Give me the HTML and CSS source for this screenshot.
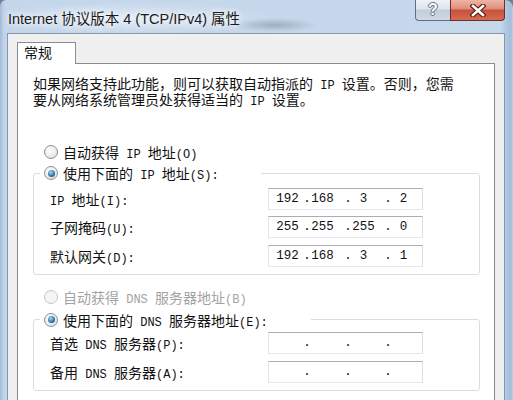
FILE: index.html
```html
<!DOCTYPE html>
<html lang="zh-CN">
<head>
  <meta charset="UTF-8" />
  <meta name="viewport" content="width=device-width, initial-scale=1.0"/>
  <title>Internet 协议版本 4 (TCP/IPv4) 属性</title>
  <link rel="stylesheet" href="styles.css">
</head>
<body>
  <div class="window">
    <div class="titlebar">
      <div class="caption">Internet 协议版本 4 (TCP/IPv4) 属性</div>
      <div class="caption-buttons">
        <div class="cap-btn help">?</div>
        <div class="cap-btn close">
          <svg width="16" height="13" viewBox="0 0 16 13">
            <path d="M3 2 L13 11 M13 2 L3 11" stroke="#5b2219" stroke-width="5" stroke-linecap="square"/>
            <path d="M3 2 L13 11 M13 2 L3 11" stroke="#fff" stroke-width="2.6" stroke-linecap="square"/>
          </svg>
        </div>
      </div>
    </div>

    <div class="client">
      <div class="tabs">
        <div class="tab">常规</div>
      </div>

      <div class="panel">
        <p class="intro">如果网络支持此功能，则可以获取自动指派的<span class="en"> IP </span>设置。否则，您需<br>要从网络系统管理员处获得适当的<span class="en"> IP </span>设置。</p>

        <label class="radio first"><span class="dot"></span><span>自动获得<span class="en"> IP </span>地址<span class="en">(O)</span></span></label>

        <fieldset class="group ip-group">
          <legend><label class="radio"><span class="dot checked"></span><span>使用下面的<span class="en"> IP </span>地址<span class="en">(S):</span></span></label></legend>
          <div class="row">
            <span class="label"><span class="en">IP </span>地址<span class="en">(I):</span></span>
            <div class="ipbox"><span class="f">192</span><span class="d">.</span><span class="f">168</span><span class="d">.</span><span class="f">3</span><span class="d">.</span><span class="f">2</span></div>
          </div>
          <div class="row">
            <span class="label">子网掩码<span class="en">(U):</span></span>
            <div class="ipbox"><span class="f">255</span><span class="d">.</span><span class="f">255</span><span class="d">.</span><span class="f">255</span><span class="d">.</span><span class="f">0</span></div>
          </div>
          <div class="row">
            <span class="label">默认网关<span class="en">(D):</span></span>
            <div class="ipbox"><span class="f">192</span><span class="d">.</span><span class="f">168</span><span class="d">.</span><span class="f">3</span><span class="d">.</span><span class="f">1</span></div>
          </div>
        </fieldset>

        <label class="radio second disabled"><span class="dot"></span><span>自动获得<span class="en"> DNS </span>服务器地址<span class="en">(B)</span></span></label>

        <fieldset class="group dns-group">
          <legend><label class="radio"><span class="dot checked"></span><span>使用下面的<span class="en"> DNS </span>服务器地址<span class="en">(E):</span></span></label></legend>
          <div class="row">
            <span class="label">首选<span class="en"> DNS </span>服务器<span class="en">(P):</span></span>
            <div class="ipbox"><span class="f"></span><span class="d">.</span><span class="f"></span><span class="d">.</span><span class="f"></span><span class="d">.</span><span class="f"></span></div>
          </div>
          <div class="row">
            <span class="label">备用<span class="en"> DNS </span>服务器<span class="en">(A):</span></span>
            <div class="ipbox"><span class="f"></span><span class="d">.</span><span class="f"></span><span class="d">.</span><span class="f"></span><span class="d">.</span><span class="f"></span></div>
          </div>
        </fieldset>
      </div>
    </div>
  </div>
</body>
</html>
```

FILE: styles.css
```css
body {
  margin: 0;
  width: 513px;
  height: 400px;
  overflow: hidden;
  background: #6f7d8c;
  font-family: "Noto Sans CJK SC", sans-serif;
  font-size: 14px;
  color: #111;
}

/* aero glass frame */
.window {
  height: 400px;
  box-sizing: border-box;
  padding: 0 8px 0 7px;
  display: flex;
  flex-direction: column;
  border-top-left-radius: 6px;
  border-top-right-radius: 8px;
  background: linear-gradient(to right, #9fb9d8 0, #bcd0e6 3px, #c4d6ea 6px, #c6d8eb 500px, #b2c8e1 506px, #a3bddb 511px, #bcd0e6 100%);
}

.titlebar {
  height: 33px;
  flex-shrink: 0;
  display: flex;
  justify-content: space-between;
  align-items: flex-start;
  background:
    radial-gradient(ellipse 42px 7px at 268px 25px, rgba(110, 125, 142, 0.45), transparent),
    radial-gradient(ellipse 150px 16px at 120px 18px, rgba(235, 242, 249, 0.7), transparent);
}

.caption {
  padding: 10px 0 0 1px;
  font-family: "Liberation Sans", "Noto Sans CJK SC", sans-serif;
  font-size: 14.5px;
  line-height: 18px;
  color: #1b1b1b;
  text-shadow: 0 0 6px #fff, 0 0 10px rgba(255, 255, 255, 0.8);
}

.caption-buttons {
  display: flex;
}

.cap-btn {
  height: 21px;
  box-sizing: border-box;
  border: 1px solid #5f6f82;
  border-top: none;
  display: flex;
  align-items: center;
  justify-content: center;
}

.help {
  width: 35px;
  border-right: none;
  border-bottom-left-radius: 4px;
  background: linear-gradient(#eef2f7 0, #dce4ed 45%, #c1cddb 50%, #cfd9e5 100%);
  color: #fff;
  font: bold 16px "Liberation Sans", sans-serif;
  text-shadow: 0 0 1px #4c5866, 1px 0 0 #6b7785, -1px 0 0 #6b7785, 0 1px 0 #6b7785, 0 -1px 0 #6b7785;
}

.close {
  width: 55px;
  border-color: #6b3128;
  border-bottom-right-radius: 4px;
  background: linear-gradient(#efb5a7 0, #de8d7a 45%, #c8513b 50%, #d66a51 100%);
}

/* dialog body */
.client {
  flex: 1;
  min-height: 0;
  display: flex;
  flex-direction: column;
  background: #f0f0f0;
  border: 1px solid #8796a8;
  border-bottom: none;
  padding: 8px 9px 0;
}

.tabs {
  display: flex;
}

.tab {
  position: relative;
  z-index: 1;
  width: 59px;
  height: 22px;
  box-sizing: border-box;
  margin-bottom: -1px;
  padding-left: 6px;
  border: 1px solid #898c95;
  border-bottom: none;
  background: #fff;
  line-height: 19px;
}

.panel {
  flex: 1;
  min-height: 0;
  overflow: hidden;
  background: #fff;
  border: 1px solid #898c95;
  border-bottom: none;
  padding: 12px 14px 0 15px;
}

.intro {
  margin: 0;
  line-height: 14.5px;
}

.en {
  font-family: "Liberation Mono", monospace;
  font-size: 12px;
  line-height: 1;
}

.radio {
  display: flex;
  align-items: center;
  height: 21px;
  white-space: nowrap;
}

.radio.first {
  margin: 33px 0 0 11px;
}

.radio.second {
  margin: 11.5px 0 0 11px;
}

.radio.disabled {
  color: #a3a3a3;
}

.dot {
  width: 14px;
  height: 14px;
  flex-shrink: 0;
  box-sizing: border-box;
  margin-right: 5px;
  border: 1px solid #8e8f8f;
  border-radius: 50%;
  background: radial-gradient(circle at 40% 35%, #fff 0, #ececec 55%, #cfcfcf 100%);
  display: flex;
  align-items: center;
  justify-content: center;
}

.disabled .dot {
  border-color: #c5c5c5;
  background: #f4f4f4;
}

.dot.checked::after {
  content: "";
  width: 7px;
  height: 7px;
  border-radius: 50%;
  background: radial-gradient(circle at 40% 35%, #a6dcf8 0, #2f78b4 55%, #103b66 100%);
}

.group {
  width: 447px;
  box-sizing: border-box;
  margin: 0;
  padding: 4px 0 7px 6px;
  border: 1px solid #d5dfe5;
  border-radius: 3px;
}

.group legend {
  padding: 0 0 0 4px;
}

.ip-group {
  margin-top: 0.5px;
}

.ip-group legend {
  width: 217px;
}

.dns-group {
  margin-top: 2px;
  padding-top: 2px;
}

.dns-group legend {
  width: 267px;
}

.row {
  display: flex;
  align-items: center;
  height: 22px;
  margin-left: 10px;
}

.row + .row {
  margin-top: 6.5px;
}

.label {
  width: 218px;
  flex-shrink: 0;
}

/* ip address control: four fields with fixed dots */
.ipbox {
  width: 155px;
  height: 22px;
  box-sizing: border-box;
  padding-left: 7px;
  border: 1px solid;
  border-color: #abadb3 #dbdfe6 #e3e9ef #e2e3ea;
  background: #fff;
  display: flex;
  align-items: center;
  font-family: "Liberation Mono", monospace;
  font-size: 12.5px;
}

.ipbox .f {
  width: 23px;
  text-align: center;
}

.ipbox .d {
  width: 8px;
  text-align: center;
}

.ipbox .d:nth-child(2) { margin-left: 4px; }
.ipbox .d:nth-child(4) { margin-left: 10px; }
.ipbox .d:nth-child(6) { margin-left: 9px; }
```
